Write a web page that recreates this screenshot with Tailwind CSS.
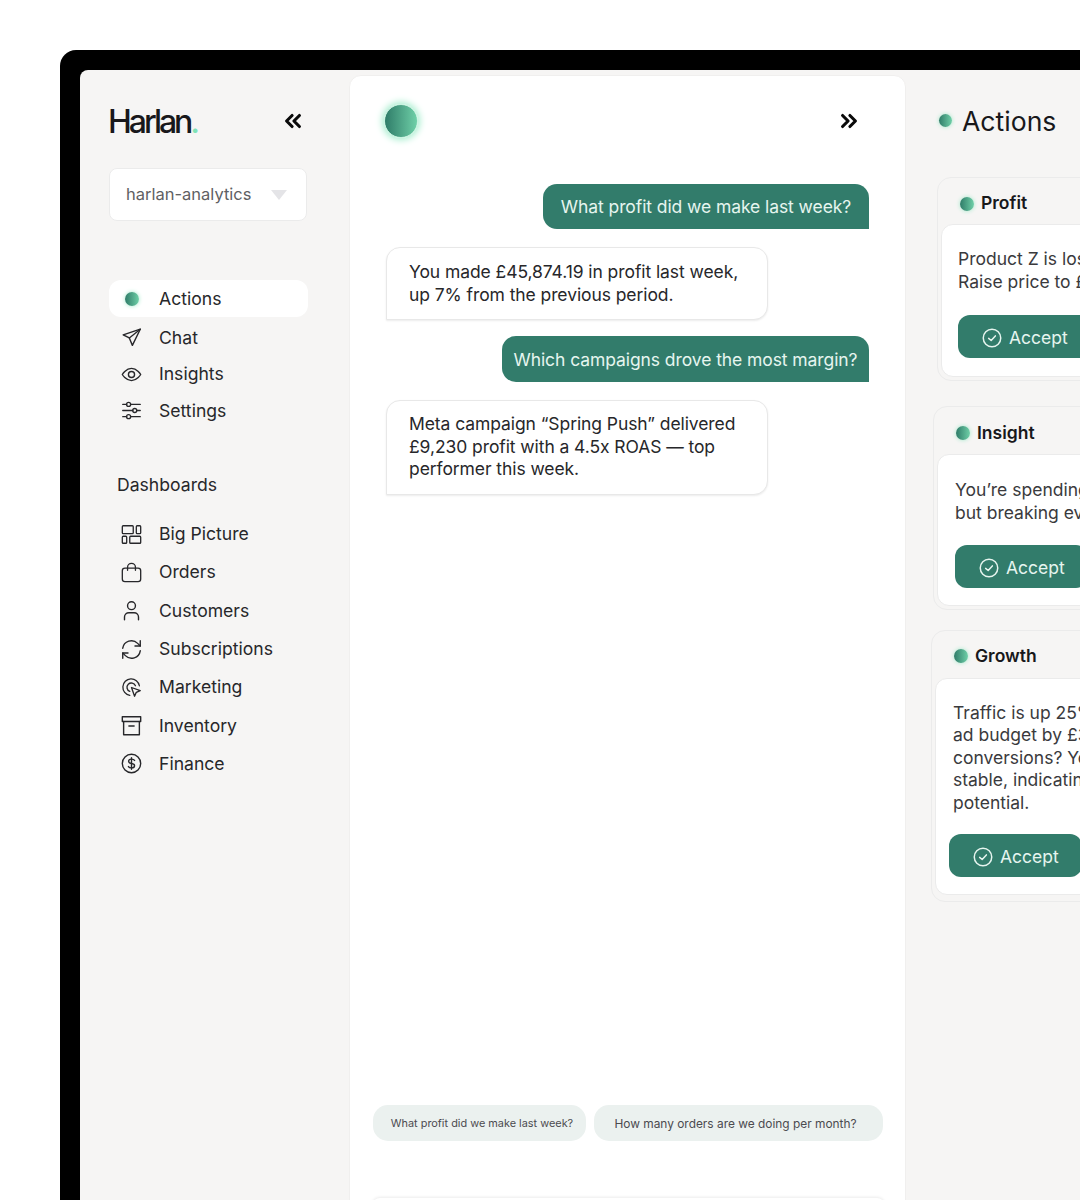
<!DOCTYPE html>
<html>
<head>
<meta charset="utf-8">
<script src="https://cdn.jsdelivr.net/npm/@tailwindcss/browser@4"></script>
</head>
<body class="bg-white overflow-hidden font-['Inter',sans-serif]">
<div class="h-[1200px] w-[1080px] overflow-hidden pt-[50px] pl-[60px]">
<div class="h-[1150px] w-[1020px] bg-black rounded-tl-[16px] pt-[20px] pl-[20px]">
<div class="h-[1130px] w-[1000px] bg-[#f6f5f4] rounded-tl-[8px] flex overflow-hidden">

<!-- sidebar -->
<aside class="w-[269px] shrink-0 pl-[29px] pt-[32px] text-[#27272a]">
  <div class="flex items-center justify-between w-[198px] h-[38px]">
    <div class="text-[32px] font-medium tracking-[-3px] text-[#18181b] leading-none -ml-[1px] pt-[1px]">Harlan<span class="text-[#7fe3b8]">.</span></div>
    <svg class="mr-[3px]" width="22" height="22" viewBox="0 0 24 24" fill="none" stroke="#0a0a0a" stroke-width="3.400" stroke-linecap="round" stroke-linejoin="round"><path d="M11 6l-6 6 6 6"/><path d="M19 6l-6 6 6 6"/></svg>
  </div>
  <div class="mt-[28px] w-[198px] h-[53px] bg-white border border-[#ebebeb] rounded-[8px] flex items-center justify-between pl-[16px] pr-[18px] text-[16.500px] text-[#5f5f63]">
    <span>harlan-analytics</span>
    <svg width="18" height="12" viewBox="0 0 18 12"><path d="M1 1h16l-8 10z" fill="#e4e4e7"/></svg>
  </div>

  <nav class="mt-[59px] w-[199px] text-[17.600px] leading-[22px]">
    <div class="h-[37px] bg-white rounded-[12px] flex items-center pl-[16px]">
      <span class="w-[14px] h-[14px] rounded-full bg-gradient-to-r from-[#2f7d69] to-[#6fd0a8] shadow-[0_0_4px_#9fe8c8]"></span>
      <span class="ml-[20px]">Actions</span>
    </div>
    <div class="flex items-center h-[37px] mt-[2px] pl-[12px]">
      <svg width="21" height="21" viewBox="0 0 24 24" fill="none" stroke="#27272a" stroke-width="1.600" stroke-linecap="round" stroke-linejoin="round"><path d="M22 2.500L2.500 9l7 3.500 3.500 8.500z"/><path d="M22 2.500L9.500 12.500"/></svg>
      <span class="ml-[17px]">Chat</span>
    </div>
    <div class="flex items-center h-[36px] pl-[12px]">
      <svg width="21" height="21" viewBox="0 0 24 24" fill="none" stroke="#27272a" stroke-width="1.600" stroke-linecap="round" stroke-linejoin="round"><path d="M1.500 12S5.500 5 12 5s10.500 7 10.500 7-4 7-10.500 7S1.500 12 1.500 12z"/><circle cx="12" cy="12" r="3.500"/></svg>
      <span class="ml-[17px]">Insights</span>
    </div>
    <div class="flex items-center h-[37px] pl-[12px]">
      <svg width="21" height="21" viewBox="0 0 24 24" fill="none" stroke="#27272a" stroke-width="1.500" stroke-linecap="round"><path d="M2 5h4.500M11 5h11M2 12h11.500M18 12h4M2 19h4.500M11 19h11"/><circle cx="8.700" cy="5" r="2.300"/><circle cx="15.700" cy="12" r="2.300"/><circle cx="8.700" cy="19" r="2.300"/></svg>
      <span class="ml-[17px]">Settings</span>
    </div>
  </nav>

  <div class="mt-[45px] pl-[8px] text-[17.600px] leading-[22px]">Dashboards</div>

  <div class="mt-[19px] text-[17.600px] leading-[22px]">
    <div class="flex items-center h-[38.300px] pl-[12px]">
      <svg width="21" height="21" viewBox="0 0 24 24" fill="none" stroke="#27272a" stroke-width="1.500" stroke-linejoin="round"><rect x="1.500" y="2" width="12.500" height="9" rx="1"/><rect x="17.500" y="2" width="5" height="9" rx="1"/><rect x="1.500" y="14" width="5" height="8" rx="1"/><rect x="10" y="14" width="12.500" height="8" rx="1"/></svg>
      <span class="ml-[17px]">Big Picture</span>
    </div>
    <div class="flex items-center h-[38.300px] pl-[12px]">
      <svg width="21" height="21" viewBox="0 0 24 24" fill="none" stroke="#27272a" stroke-width="1.500" stroke-linecap="round" stroke-linejoin="round"><rect x="1.500" y="7" width="21" height="15.500" rx="3"/><path d="M7.500 9.500V6a4.500 4.500 0 0 1 9 0v3.500"/></svg>
      <span class="ml-[17px]">Orders</span>
    </div>
    <div class="flex items-center h-[38.300px] pl-[12px]">
      <svg width="21" height="21" viewBox="0 0 24 24" fill="none" stroke="#27272a" stroke-width="1.600" stroke-linecap="round" stroke-linejoin="round"><circle cx="12" cy="6.500" r="4.500"/><path d="M4 22.500v-3a5 5 0 0 1 5-5h6a5 5 0 0 1 5 5v3"/></svg>
      <span class="ml-[17px]">Customers</span>
    </div>
    <div class="flex items-center h-[38.300px] pl-[12px]">
      <svg width="21" height="21" viewBox="0 0 24 24" fill="none" stroke="#27272a" stroke-width="1.600" stroke-linecap="round" stroke-linejoin="round"><path d="M2 10.500A10 10 0 0 1 19 5l3 3"/><path d="M22 2v6h-6"/><path d="M22 13.500A10 10 0 0 1 5 19l-3-3"/><path d="M2 22v-6h6"/></svg>
      <span class="ml-[17px]">Subscriptions</span>
    </div>
    <div class="flex items-center h-[38.300px] pl-[12px]">
      <svg width="21" height="21" viewBox="0 0 24 24" fill="none" stroke="#27272a" stroke-width="1.500" stroke-linecap="round" stroke-linejoin="round"><path d="M10 21A9.500 9.500 0 1 1 21 10"/><path d="M10 16.500a5 5 0 1 1 6.500-6.500"/><path d="M12 12l10 3.500-4.500 2-2 4.500z"/></svg>
      <span class="ml-[17px]">Marketing</span>
    </div>
    <div class="flex items-center h-[38.300px] pl-[12px]">
      <svg width="21" height="21" viewBox="0 0 24 24" fill="none" stroke="#27272a" stroke-width="1.600" stroke-linecap="round" stroke-linejoin="round"><path d="M1.500 2h21v5.500h-21z"/><path d="M3 7.500V22.500h18V7.500"/><path d="M9 12.500h6"/></svg>
      <span class="ml-[17px]">Inventory</span>
    </div>
    <div class="flex items-center h-[38.300px] pl-[12px]">
      <svg width="21" height="21" viewBox="0 0 24 24" fill="none" stroke="#27272a" stroke-width="1.600" stroke-linecap="round" stroke-linejoin="round"><circle cx="12" cy="12" r="10.500"/><path d="M15.500 8.500c-.6-1-1.800-1.500-3.500-1.500-2 0-3.300 1-3.300 2.500S10 11.700 12 12s3.500 1 3.500 2.500S14 17 12 17c-1.700 0-3-.6-3.500-1.500"/><path d="M12 5.500v13"/></svg>
      <span class="ml-[17px]">Finance</span>
    </div>
  </div>
</aside>

<!-- main chat -->
<main class="mt-[5px] w-[557px] shrink-0 h-[1130px] bg-white border border-[#f0efee] rounded-t-[12px] relative">
  <div class="flex items-center justify-between pl-[34px] pr-[45px] h-[90px]">
    <span class="w-[34px] h-[34px] rounded-full bg-gradient-to-r from-[#2f7d69] to-[#6fd0a8] border border-[#c3f2dd] shadow-[0_0_7px_2px_#a5edcd]"></span>
    <svg width="22" height="22" viewBox="0 0 24 24" fill="none" stroke="#0a0a0a" stroke-width="3.400" stroke-linecap="round" stroke-linejoin="round"><path d="M5 6l6 6-6 6"/><path d="M13 6l6 6-6 6"/></svg>
  </div>
  <div class="flex flex-col mt-[18px] pl-[36px] pr-[36px] text-[17.500px] tracking-[-0.080px] leading-[22.500px]">
    <div class="self-end h-[45px] w-[326px] justify-center pt-[1px] flex items-center bg-[#327c6b] text-[#e6f5ef] rounded-t-[14px] rounded-bl-[14px]">What profit did we make last week?</div>
    <div class="mt-[18px] w-[382px] h-[73px] px-[22px] pt-[13px] bg-white text-[#27272a] border border-[#e8e8e8] shadow-[0_1px_2px_rgba(0,0,0,.08)] rounded-t-[14px] rounded-br-[14px]">You made £45,874.19 in profit last week,<br>up 7% from the previous period.</div>
    <div class="self-end mt-[16px] h-[46px] w-[367px] justify-center pt-[2px] flex items-center bg-[#327c6b] text-[#e6f5ef] rounded-t-[14px] rounded-bl-[14px]">Which campaigns drove the most margin?</div>
    <div class="mt-[18px] w-[382px] h-[95px] px-[22px] pt-[12px] bg-white text-[#27272a] border border-[#e8e8e8] shadow-[0_1px_2px_rgba(0,0,0,.08)] rounded-t-[14px] rounded-br-[14px]">Meta campaign “Spring Push” delivered<br>£9,230 profit with a 4.5x ROAS — top<br>performer this week.</div>
  </div>
  <div class="absolute left-[23px] top-[1029px] flex gap-[8px] text-[#4b4b4f]">
    <div class="w-[213px] h-[36px] rounded-[15px] bg-[#ebf1ef] flex items-center justify-center pl-[5px] text-[10.900px]">What profit did we make last week?</div>
    <div class="w-[289px] h-[36px] rounded-[15px] bg-[#ebf1ef] flex items-center justify-center pr-[6px] text-[11.900px] pt-[1px]">How many orders are we doing per month?</div>
  </div>
  <div class="absolute left-[22px] top-[1122px] w-[513px] h-[8px] rounded-t-[8px] bg-white shadow-[0_-1px_3px_rgba(0,0,0,.08)]"></div>
</main>

<!-- actions -->
<section class="flex-1 min-w-0 overflow-hidden text-[17.500px] leading-[22.500px] text-[#27272a]">
  <div class="flex items-center pl-[33px] pt-[30px] h-[71px]">
    <span class="w-[13px] h-[13px] rounded-full bg-gradient-to-r from-[#2f7d69] to-[#6fd0a8] shadow-[0_0_4px_#9fe8c8]"></span>
    <span class="ml-[10px] text-[26.600px] leading-[34px] text-[#18181b]">Actions</span>
  </div>

  <div class="ml-[31px] mt-[36px] w-[400px] h-[204px] border border-[#ebebeb] rounded-[14px] p-[3px]">
    <div class="flex items-center h-[43px] pl-[19px] pt-[2px]">
      <span class="w-[14px] h-[14px] rounded-full bg-gradient-to-r from-[#2f7d69] to-[#6fd0a8] shadow-[0_0_4px_#9fe8c8]"></span>
      <span class="ml-[7px] font-semibold text-[#18181b]">Profit</span>
    </div>
    <div class="h-[153px] bg-white border border-[#ebebeb] rounded-[12px] pl-[16px] pt-[23px] whitespace-nowrap">
      <p class="text-[#3a3a3d]">Product Z is losing £4.10 on every sale.<br>Raise price to £29 to break even.</p>
      <div class="mt-[22px] w-[133px] h-[43px] pt-[3px] rounded-[12px] bg-[#327c6b] text-[#e6f5ef] flex items-center pl-[24px]">
        <svg width="20" height="20" viewBox="0 0 24 24" fill="none" stroke="#e6f5ef" stroke-width="1.800" stroke-linecap="round" stroke-linejoin="round"><circle cx="12" cy="12" r="10.500"/><path d="M8 12.500l3 2.500 5-5.500"/></svg>
        <span class="ml-[7px]">Accept</span>
      </div>
    </div>
  </div>

  <div class="ml-[27px] mt-[25px] w-[400px] h-[204px] border border-[#ebebeb] rounded-[14px] p-[3px]">
    <div class="flex items-center h-[44px] pl-[19px] pt-[2px]">
      <span class="w-[14px] h-[14px] rounded-full bg-gradient-to-r from-[#2f7d69] to-[#6fd0a8] shadow-[0_0_4px_#9fe8c8]"></span>
      <span class="ml-[7px] font-semibold text-[#18181b]">Insight</span>
    </div>
    <div class="h-[152px] bg-white border border-[#ebebeb] rounded-[12px] pl-[17px] pt-[24px] whitespace-nowrap">
      <p class="text-[#3a3a3d]">You’re spending £2,400 on Google ads<br>but breaking even on most campaigns.</p>
      <div class="mt-[21px] w-[133px] h-[43px] pt-[3px] rounded-[12px] bg-[#327c6b] text-[#e6f5ef] flex items-center pl-[24px]">
        <svg width="20" height="20" viewBox="0 0 24 24" fill="none" stroke="#e6f5ef" stroke-width="1.800" stroke-linecap="round" stroke-linejoin="round"><circle cx="12" cy="12" r="10.500"/><path d="M8 12.500l3 2.500 5-5.500"/></svg>
        <span class="ml-[7px]">Accept</span>
      </div>
    </div>
  </div>

  <div class="ml-[25px] mt-[20px] w-[400px] h-[272px] border border-[#ebebeb] rounded-[14px] p-[3px]">
    <div class="flex items-center h-[44px] pl-[19px]">
      <span class="w-[14px] h-[14px] rounded-full bg-gradient-to-r from-[#2f7d69] to-[#6fd0a8] shadow-[0_0_4px_#9fe8c8]"></span>
      <span class="ml-[7px] font-semibold text-[#18181b]">Growth</span>
    </div>
    <div class="h-[217px] bg-white border border-[#ebebeb] rounded-[12px] pl-[17px] pt-[22.500px] whitespace-nowrap">
      <p class="text-[#3a3a3d]">Traffic is up 25% this week. Increase your<br>ad budget by £300 to capture more<br>conversions? Your conversion rate is<br>stable, indicating strong growth<br>potential.</p>
      <div class="mt-[20px] -ml-[4px] w-[133px] h-[43px] pt-[3px] rounded-[12px] bg-[#327c6b] text-[#e6f5ef] flex items-center pl-[24px]">
        <svg width="20" height="20" viewBox="0 0 24 24" fill="none" stroke="#e6f5ef" stroke-width="1.800" stroke-linecap="round" stroke-linejoin="round"><circle cx="12" cy="12" r="10.500"/><path d="M8 12.500l3 2.500 5-5.500"/></svg>
        <span class="ml-[7px]">Accept</span>
      </div>
    </div>
  </div>
</section>

</div>
</div>
</div>
</body>
</html>
